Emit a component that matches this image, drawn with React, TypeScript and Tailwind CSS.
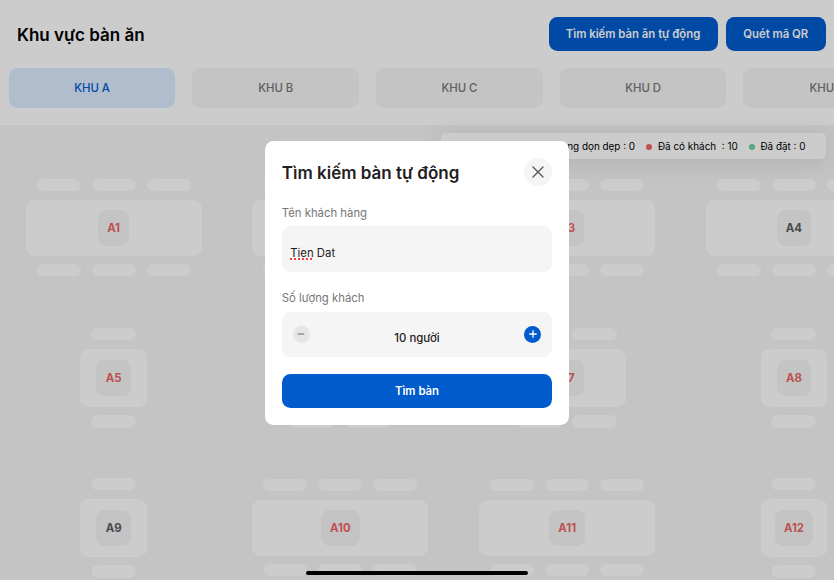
import React from 'react';

type TableSize = 'small' | 'medium' | 'large';

interface DiningTable {
  name: string;
  size: TableSize;
  busy: boolean;
}

const areas = ['KHU A', 'KHU B', 'KHU C', 'KHU D', 'KHU E'];

const tables: DiningTable[] = [
  { name: 'A1', size: 'large', busy: true },
  { name: 'A2', size: 'large', busy: true },
  { name: 'A3', size: 'large', busy: true },
  { name: 'A4', size: 'large', busy: false },
  { name: 'A5', size: 'small', busy: true },
  { name: 'A6', size: 'medium', busy: true },
  { name: 'A7', size: 'medium', busy: true },
  { name: 'A8', size: 'small', busy: true },
  { name: 'A9', size: 'small', busy: false },
  { name: 'A10', size: 'large', busy: true },
  { name: 'A11', size: 'large', busy: true },
  { name: 'A12', size: 'small', busy: true },
];

const boardClass: Record<TableSize, string> = {
  small: 'w-[66.5px] h-[57.5px]',
  medium: 'w-[118px] h-[57.5px]',
  large: 'w-[176px] h-[56px]',
};

const chairCount: Record<TableSize, number> = { small: 1, medium: 2, large: 3 };

function Chairs({ size }: { size: TableSize }) {
  const chair = size === 'large' ? 'w-[44px] h-[11.7px]' : 'w-[45px] h-[12.4px]';
  return (
    <div className={`flex ${size === 'large' ? 'gap-[11px]' : 'gap-[10px]'}`}>
      {Array.from({ length: chairCount[size] }, (_, i) => (
        <span key={i} className={`${chair} rounded-full bg-white`} />
      ))}
    </div>
  );
}

function TableCell({ table }: { table: DiningTable }) {
  return (
    <div className="flex flex-col items-center justify-center gap-[8.7px]">
      <Chairs size={table.size} />
      <div className={`${boardClass[table.size]} flex items-center justify-center rounded-[8.5px] bg-white`}>
        <span
          className={`flex h-9 items-center rounded-[8.5px] bg-[#f5f5f5] px-[9.2px] pt-[2px] text-[11.4px] font-bold ${
            table.busy ? 'text-[#ed6668]' : 'text-[#5c5f62]'
          }`}
        >
          {table.name}
        </span>
      </div>
      <Chairs size={table.size} />
    </div>
  );
}

function Dot({ className }: { className: string }) {
  return <span className={`mr-[5.5px] size-[6px] rounded-full ${className}`} />;
}

function Modal() {
  return (
    <div className="absolute left-[264.8px] top-[141.4px] flex h-[283.4px] w-[304.4px] flex-col rounded-[8.5px] bg-white px-[17px] pt-[17px] text-[#1f2022]">
      <div className="flex h-[28px] items-center justify-between">
        <h2 className="pt-[3px] text-[17px] font-semibold">Tìm kiếm bàn tự động</h2>
        <button className="flex size-[28px] items-center justify-center rounded-full bg-[#f5f5f5]">
          <svg width="12" height="12" viewBox="0 0 12 12" fill="none" stroke="#515457" strokeWidth="1.25" strokeLinecap="round">
            <path d="M1 1l10 10M11 1L1 11" />
          </svg>
        </button>
      </div>
      <label className="mt-[17px] h-[18px] pt-[1px] text-[11.33px] leading-[18px] text-[#757779]">Tên khách hàng</label>
      <div className="mt-[5px] flex h-[45.5px] items-center rounded-[8.5px] bg-[#f5f5f5] px-[8.5px] pt-[9px] text-[11.33px]">
        <span className="whitespace-pre">
          <span className="underline decoration-[#f04040] decoration-dotted decoration-[1.5px] underline-offset-[1px] [text-decoration-skip-ink:none]">Tien</span> Dat
        </span>
      </div>
      <label className="mt-[17px] h-[18px] text-[11.33px] leading-[18px] text-[#757779]">Số lượng khách</label>
      <div className="mt-[5px] flex h-[45px] items-center justify-between rounded-[8.5px] bg-[#f5f5f5] px-[11px]">
        <button className="flex size-[17px] items-center justify-center rounded-full bg-[#e6e6e6]">
          <svg width="8" height="8" viewBox="0 0 8 8" stroke="#8c8c8c" strokeWidth="1.4">
            <path d="M.7 4h6.6" />
          </svg>
        </button>
        <span className="pt-[8px] text-[11.33px] font-medium">10 người</span>
        <button className="flex size-[17px] items-center justify-center rounded-full bg-[#005ccd]">
          <svg width="8" height="8" viewBox="0 0 8 8" stroke="#fff" strokeWidth="1.3">
            <path d="M.3 4h7.4M4 .3v7.4" />
          </svg>
        </button>
      </div>
      <button className="mt-[17px] h-[34.3px] shrink-0 rounded-[8.5px] bg-[#005ccd] text-[11.33px] font-semibold text-white">
        Tìm bàn
      </button>
    </div>
  );
}

export default function App() {
  return (
    <div className="h-[583px] w-[837px] overflow-hidden bg-white font-['Inter',sans-serif]">
      <div className="relative flex h-[580.3px] w-[834px] flex-col overflow-hidden bg-white">
        <header className="flex h-[68px] shrink-0 items-center justify-between pl-[17px] pr-[8.5px]">
          <h1 className="pt-[3px] text-[17px] font-semibold text-black">Khu vực bàn ăn</h1>
          <div className="flex gap-[8.5px]">
            <button className="h-[34px] w-[169px] rounded-[8.5px] bg-[#005ccd] pt-[1.5px] text-[11.33px] font-semibold text-white">
              Tìm kiếm bàn ăn tự động
            </button>
            <button className="h-[34px] w-[99.5px] rounded-[8.5px] bg-[#005ccd] pt-[1.5px] text-[11.33px] font-semibold text-white">
              Quét mã QR
            </button>
          </div>
        </header>
        <nav className="flex h-[56.5px] shrink-0 gap-[17px] pl-[8.7px]">
          {areas.map((area, i) => (
            <button
              key={area}
              className={`h-[39.6px] w-[166.7px] shrink-0 rounded-[8.5px] pt-[2px] text-[11.33px] font-medium ${
                i === 0 ? 'bg-[#dcedff] text-[#005ccd]' : 'bg-[#f5f5f5] text-[#757779]'
              }`}
            >
              {area}
            </button>
          ))}
        </nav>
        <main className="grow bg-[#f5f5f5] pl-[0.2px] pt-[28.3px]">
          <div className="grid auto-rows-[150px] grid-cols-[repeat(4,226.8px)]">
            {tables.map((table) => (
              <TableCell key={table.name} table={table} />
            ))}
          </div>
        </main>
        <div className="absolute right-[8.5px] top-[133.2px] flex h-[26px] w-[384.5px] items-center justify-end whitespace-pre rounded-[5px] bg-white pr-[20px] pt-[1px] text-[9.92px] text-black shadow-[0_3px_24px_rgba(0,0,0,0.1)]">
          <Dot className="bg-[#f5b74f]" />
          <span>Đang dọn dẹp : 0</span>
          <span className="w-[11.3px]" />
          <Dot className="bg-[#ed6668]" />
          <span>Đã có khách  : 10</span>
          <span className="w-[11.3px]" />
          <Dot className="bg-[#6bd3a0]" />
          <span>Đã đặt : 0</span>
        </div>
        <div className="absolute inset-0 bg-black/20" />
        <Modal />
        <div className="absolute left-[306px] top-[571px] h-[4.3px] w-[222px] rounded-full bg-black" />
      </div>
    </div>
  );
}
